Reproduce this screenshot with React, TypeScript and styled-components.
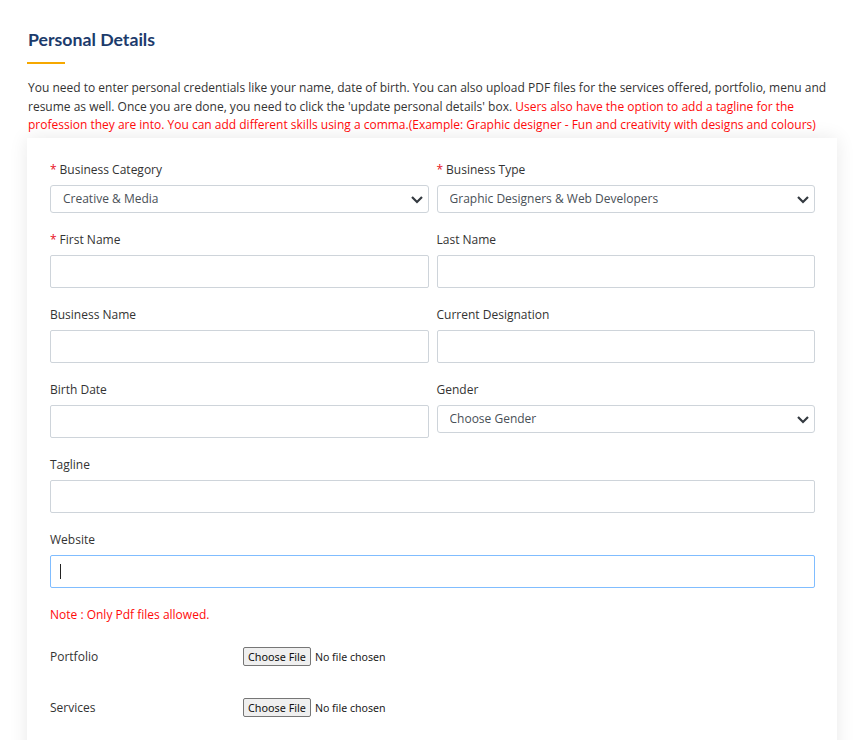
import React from 'react';
import styled, { createGlobalStyle } from 'styled-components';

const GlobalStyle = createGlobalStyle`
  html, body {
    margin: 0;
    padding: 0;
    background: #fff;
    overflow: hidden;
  }
  * {
    box-sizing: border-box;
  }
`;

const Page = styled.div`
  height: 740px;
  overflow: hidden;
  padding: 28px 21px 0 27px;
  font-family: 'Open Sans', 'Liberation Sans', sans-serif;
  font-size: 12px;
  color: #333;
`;

const Title = styled.h2`
  margin: 0 0 0 1px;
  font-family: Lato, 'Open Sans', sans-serif;
  font-weight: 700;
  font-size: 17.7px;
  line-height: 24px;
  color: #1c3b6c;
`;

const Underline = styled.div`
  width: 38px;
  height: 2px;
  margin-top: 10px;
  background: #f6a800;
`;

const Intro = styled.p`
  margin: 15px 0 3px 1px;
  line-height: 18.5px;
  color: #333;
`;

const Red = styled.span`
  color: #ff0a0a;
`;

const Card = styled.div`
  background: #fff;
  box-shadow: 0 0 18px rgba(0, 0, 0, 0.09);
  padding: 22px 22px 60px 23px;
`;

const Row = styled.div`
  display: grid;
  grid-template-columns: 1fr 1fr;
  column-gap: 8px;
`;

const Field = styled.div`
  display: flex;
  flex-direction: column;
  margin-bottom: 17px;
`;

const Label = styled.label`
  line-height: 20px;
  height: 20px;
  margin-bottom: 5px;
  color: #333;
`;

const Star = styled.span`
  color: #e8101c;
  margin-right: 3px;
`;

const Input = styled.input<{ $focused?: boolean }>`
  height: 33px;
  width: 100%;
  border: 1px solid ${(p) => (p.$focused ? '#80bdff' : '#ced4da')};
  border-radius: 2px;
  padding: 0 12px;
  font-family: inherit;
  font-size: 12px;
  color: #495057;
  background: #fff;
  outline: none;
`;

const InputWrap = styled.div`
  position: relative;
`;

const Caret = styled.span`
  position: absolute;
  left: 10px;
  top: 9px;
  width: 1px;
  height: 15px;
  background: #222;
`;

const SelectWrap = styled.div`
  position: relative;
  height: 28px;
`;

const Select = styled.select`
  appearance: none;
  width: 100%;
  height: 28px;
  border: 1px solid #ced4da;
  border-radius: 3px;
  padding: 0 30px 0 12px;
  font-family: inherit;
  font-size: 12px;
  color: #495057;
  background: #fff;
  outline: none;
`;

const Chevron = styled.svg`
  position: absolute;
  right: 5px;
  top: 10px;
  pointer-events: none;
`;

const Note = styled.div`
  line-height: 20px;
  color: #ff0a0a;
  margin-bottom: 22px;
`;

const FileRow = styled.div`
  display: grid;
  grid-template-columns: 193px 1fr;
  align-items: center;
  height: 20px;
  margin-bottom: 31px;
`;

const FileLabel = styled.span`
  line-height: 20px;
  color: #333;
`;

const FileInput = styled.input`
  font-family: 'Noto Sans', 'Open Sans', sans-serif;
  font-size: 10.6px;
  color: #222;
  &::file-selector-button {
    font-family: 'Noto Sans', 'Open Sans', sans-serif;
    font-size: 10.8px;
    color: #111;
    height: 19px;
    padding: 0 4px;
    margin-right: 4px;
    background: #efefef;
    border: 1px solid #767676;
    border-radius: 2px;
  }
`;

const ChevronDown = () => (
  <Chevron width="14" height="9" viewBox="0 0 14 9">
    <path d="M2 2 L7 7 L12 2" fill="none" stroke="#343a40" strokeWidth="2.2" />
  </Chevron>
);

const SelectField = ({ label, required, value }: { label: string; required?: boolean; value: string }) => (
  <Field>
    <Label>
      {required && <Star>*</Star>}
      {label}
    </Label>
    <SelectWrap>
      <Select defaultValue={value}>
        <option>{value}</option>
      </Select>
      <ChevronDown />
    </SelectWrap>
  </Field>
);

const TextField = ({ label, required }: { label: string; required?: boolean }) => (
  <Field>
    <Label>
      {required && <Star>*</Star>}
      {label}
    </Label>
    <Input type="text" />
  </Field>
);

const fileFields = ['Portfolio', 'Services'];

export default function App() {
  return (
    <>
      <GlobalStyle />
      <Page>
        <Title>Personal Details</Title>
        <Underline />
        <Intro>
          You need to enter personal credentials like your name, date of birth. You can also upload PDF files for the
          services offered, portfolio, menu and resume as well. Once you are done, you need to click the 'update personal
          details' box.{' '}
          <Red>
            Users also have the option to add a tagline for the profession they are into. You can add different skills
            using a comma.(Example: Graphic designer - Fun and creativity with designs and colours)
          </Red>
        </Intro>
        <Card>
          <Row>
            <SelectField label="Business Category" required value="Creative & Media" />
            <SelectField label="Business Type" required value="Graphic Designers & Web Developers" />
          </Row>
          <Row>
            <TextField label="First Name" required />
            <TextField label="Last Name" />
          </Row>
          <Row>
            <TextField label="Business Name" />
            <TextField label="Current Designation" />
          </Row>
          <Row>
            <TextField label="Birth Date" />
            <SelectField label="Gender" value="Choose Gender" />
          </Row>
          <TextField label="Tagline" />
          <Field>
            <Label>Website</Label>
            <InputWrap>
              <Input type="text" $focused />
              <Caret />
            </InputWrap>
          </Field>
          <Note>Note : Only Pdf files allowed.</Note>
          {fileFields.map((name) => (
            <FileRow key={name}>
              <FileLabel>{name}</FileLabel>
              <FileInput type="file" accept="application/pdf" />
            </FileRow>
          ))}
        </Card>
      </Page>
    </>
  );
}
